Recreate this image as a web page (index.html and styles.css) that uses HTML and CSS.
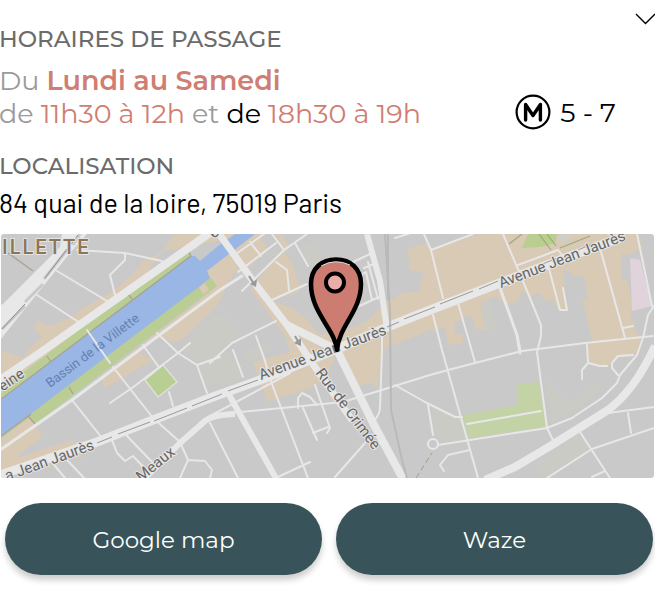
FILE: index.html
```html
<!DOCTYPE html>
<html lang="fr">
<head>
<meta charset="utf-8">
<meta name="viewport" content="width=device-width, initial-scale=1">
<title>Point de passage</title>
<link rel="stylesheet" href="styles.css">
</head>
<body>
<main class="place">
  <header class="top">
    <h2 class="heading">HORAIRES DE PASSAGE</h2>
    <button class="toggle" type="button" aria-label="Replier">
      <svg viewBox="0 0 20 12" width="20" height="12"><path d="M1 1 L10.500 10.500 L20 1" fill="none" stroke="#000" stroke-width="1.400"/></svg>
    </button>
  </header>
  <section class="schedule">
    <p class="hours">Du <strong>Lundi au Samedi</strong><br>de <em>11h30 à 12h</em> et <b>de</b> <em>18h30 à 19h</em></p>
    <p class="metro">
      <svg viewBox="0 0 36 36" width="36" height="36" aria-hidden="true"><circle cx="18" cy="18" r="16.400" fill="none" stroke="#000" stroke-width="2.200"/><path d="M10.600 26V10.500L18 21.500L25.400 10.500V26" fill="none" stroke="#000" stroke-width="3.400" stroke-linejoin="round" stroke-linecap="round"/></svg>
      <span>5 - 7</span>
    </p>
  </section>
  <h2 class="heading">LOCALISATION</h2>
  <address class="address">84 quai de la loire, 75019 Paris</address>
  <svg class="map" viewBox="1 234 653 244" role="img" aria-label="Plan du quartier">
    <rect x="0" y="234" width="655" height="244" fill="#c9c9c9"/>
    <g fill="#d9cab5">
      <path d="M175 234H255L240 250L222 240L164 251L143 261L132 275L113 291L80 310L70 318L50 326L37 321L35 331L43 336L30 348L23 358L0 350V400L120 310Z"/>
      <path d="M0 440L30 417L42 435L35 443L19 454L17 458L40 450L73 440L82 457L50 465L0 478Z"/>
      <path d="M215 278L229 268L235 270L217 306L180 341L172 342L160 336L133 350L153 360L105 388L100 377L200 300Z"/>
      <path d="M205 259L224 240L253 234L282 234L292 252L300 270L299 292L271 300L293 309L306 319L318 334L340 332L366 322L388 300L394 298L418 294L423 272L410 270L408 249L430 242V330L382 350L377 388L370 382L356 388L337 353L327 375L335 372L313 387L268 402L253 362L290 352L285 335L268 313L237 271L210 293Z"/>
      <path d="M425 252L478 234H638L643 248L628 256L622 253V280L628 281L633 310L630 311L637 335L643 336L637 353L612 360L610 366L588 363L587 345L592 341L583 301L588 296L583 276L572 275L568 270L563 271L567 310H558L553 300L545 301L540 293L530 296L522 291L518 301L505 306L497 296L481 303L484 321L485 331L475 328L473 318L465 316L455 323V333L463 335V343L448 345L445 328L425 330Z"/>
    </g>
    <g fill="#c9c9c9">
      <path d="M262 234H276L282 250L250 290L236 266L262 245Z M284 253L296 244L306 262L299 284L292 262Z"/>
      <path d="M425 234H478L431 251Z"/>
    </g>
    <path d="M237 254L262 240L268 250L244 272Z M273 262L285 268L288 285L268 298L256 284Z" fill="#d9cab5"/>
    <g fill="#cacbc4">
      <path d="M210 318L226 315L240 333L219 350L215 372L208 390L194 360L182 348Z M210 363L233 352L243 377L217 389Z M301 247L316 243L322 256L314 268L304 260Z"/>
      <path d="M545 380L568 403L598 382L603 387L572 413L552 422Z M432 405L463 418L468 440L435 442Z M535 463L578 433L590 448L550 477H542Z M480 303L490 301L496 328L485 331Z M243 352L263 344L270 352L248 362Z"/>
    </g>
    <path d="M390 300L400 294L425 290L422 305L392 323Z" fill="#d9cab5"/>
    <path d="M630 258L640 260L652 306L632 311Z" fill="#e0d3dc"/>
    <path d="M528 234H558L555 243L541 247L522 248Z" fill="#b9ce8f"/>
    <path d="M555 236L575 234L565 243Z" fill="#cfcfca"/>
    <path d="M463 415L518 405L517 384L539 382L546 427L468 438Z" fill="#c4d3a6"/>
    <path d="M163 365L177 382L158 397L145 380Z" fill="#b9ce92" stroke="#dedfd9" stroke-width="1.500"/>
    <path d="M0 390L187 248L192 257L0 403Z M0 437L210 277L217 286L35 424L30 417L0 439Z" fill="#b9cd95"/>
    <path d="M199 287L205 283L209 290L203 294Z" fill="#d9cab5"/>
    <path d="M0 400L190 256H195L200 261L218 246L235 234H255L207 271L210 278L200 286L0 437Z" fill="#99b6e4"/>
    <path d="M0 400L191 256L188 250M128 294L132 299M47 356L51 362M69 387L73 394M28 416L35 424M0 437L31 414" fill="none" stroke="#a8a391" stroke-width="1.300"/>
    <path d="M62 234H87L70 253L45 284L0 340V307L25 282L60 247Z" fill="#e8e8e8"/>
    <path d="M80 234L73 245M67 250L44 279M43 284L25 302M25 306L2 329" fill="none" stroke="#c9c9c9" stroke-width="3"/>
    <path d="M78 235L45 278M25 304L2 329" fill="none" stroke="#8f8f8f" stroke-width="1"/>
    <path d="M8 253L33 271" stroke="#aaa28e" stroke-width="1.300"/>
    <path d="M509 244L522 234M539 234L551 250M547 234L556 246M560 248L590 236" fill="none" stroke="#99aa7d" stroke-width="1.200"/>
    <g fill="none" stroke="#e7e7e7" stroke-width="2" stroke-linejoin="round" stroke-linecap="round">
      <path d="M77 250L125 253L162 261M125 253V260L110 275L115 295M57 271L107 301M37 295L80 323M0 305L7 308M87 330L110 363"/>
      <path d="M157 333L178 353L197 365L220 357M197 365L207 393M143 345L158 366M178 353L132 388L110 403M72 400L102 438M178 353L190 343M169 392L173 406"/>
      <path d="M113 367L153 418L180 442L188 460L205 461L212 470L210 478M188 460L180 478M112 440L117 453L125 461L133 456L150 474M126 435L154 464M50 460L65 478M68 461L84 478"/>
      <path d="M232 343L276 321M256 336L264 358L273 387L308 478M210 363L232 343M233 350L243 377M210 423L238 478M278 477L310 462M290 373L210 416"/>
      <path d="M317 405L310 397L302 393L298 398V408M303 408L317 440M315 385L330 428L327 433M313 433L328 427M335 477L365 443"/>
      <path d="M236 254L264 234M272 234L284 250L242 291M250 242L261 256M276 262L287 270L289 290M295 243L308 266M272 300L307 284M276 243L238 272M284 250L307 234M395 238L420 230"/>
      <path d="M353 262L370 254M356 278L366 272L372 300M364 268L374 264M368 262L378 299M355 308L379 297M382 328V350L380 407Q380 415 373 422M424 234L431 250L443 298M431 250L473 234"/>
      <path d="M230 413L343 402L430 375L448 370L522 351L585 343L653 336M395 385L425 402L455 417H462M433 315L442 350L478 478M458 303L475 362M428 405L433 435M438 445L547 428"/>
      <path d="M503 234L523 281L541 325V336L537 352L547 428L553 440M518 265L558 250L562 255M548 265L560 310H567L563 288M600 248L625 338M623 328L633 326M637 234L652 306M467 424L541 411"/>
      <path d="M547 428L572 418L602 398L617 383L620 375L637 355L643 338L648 315L654 306M580 432L610 478M547 478L592 449L654 428M608 413L654 407M628 413L631 433M592 477L605 471M470 450L448 455L440 465L444 471M587 345L588 363L582 370V379M588 363L600 366H607M633 355L618 356L612 363V368L618 375"/>
      <path d="M0 450L72 400L220 290L242 276" stroke-width="3"/>
      <path d="M500 288L517 335L520 353M517 335L520 351" stroke-width="3"/>
    </g>
    <g fill="none" stroke="#e8e8e8" stroke-linejoin="round">
      <path d="M0 380L37 355L207 235L212 231" stroke-width="8"/>
      <path d="M217 231L253 281L287 325L310 360L352 420" stroke-width="7"/>
      <path d="M287 325L337 350L373 423L403 479" stroke-width="8"/>
      <path d="M143 480L180 443L205 421Q212 415 235 414" stroke-width="6"/>
      <path d="M228 393L277 480M367 234L380 281L387 329" stroke-width="6"/>
      <path d="M485 480L515 467L552 445L608 410Q635 390 655 346" stroke-width="8"/>
      <path d="M0 475L97 442L153 420L210 398L260 380L337 349L390 326L430 310L500 283L560 260L620 238" stroke-width="9"/>
    </g>
    <circle cx="433" cy="444" r="5" fill="#c9c9c9" stroke="#e7e7e7" stroke-width="2"/>
    <path d="M385 234L390 312L391 410L402 460L407 478M388 234L388 300" fill="none" stroke="#b9b9b9" stroke-width="2"/>
    <path d="M97 443L112 437M118 434L150 422M154 421L187 408M192 406L222 394M228 391L258 380M387 327L399 322M404 319L435 307M440 304L473 291M479 289L498 281M540 265L560 257M578 250L592 244" fill="none" stroke="#999" stroke-width="1"/>
    <path d="M416 478L432 453" stroke="#9da184" stroke-dasharray="6 3"/>
    <g fill="#999" stroke="#999"><path d="M249 276L254 284" stroke-width="2"/><path d="M250 284L257 279L256 287Z" stroke="none"/><path d="M295 336L299 343" stroke-width="2"/><path d="M294 343L301 338L301 346Z" stroke="none"/></g>
    <g class="road">
      <text transform="translate(2 254)" class="district">ILLETTE</text>
      <text transform="translate(50 388) rotate(-37)" class="water">Bassin de la Villette</text>
      <text transform="translate(261 380) rotate(-20)">Avenue Jean Jaurès</text>
      <text transform="translate(501 288) rotate(-21)">Avenue Jean Jaurès</text>
      <text transform="translate(7 481) rotate(-20)">a Jean Jaurès</text>
      <text transform="translate(-4 396) rotate(-34)">seine</text>
      <text transform="translate(141 482) rotate(-39)">Meaux</text>
      <text transform="translate(315 373) rotate(53)">Rue de Crimée</text>
      <text transform="translate(214 239) rotate(-42)">e</text>
    </g>
    <path d="M337 350C335 329 311 313 311 284C311 268 322 259.500 336 259.500C351 259.500 361 269 361 284C361 311 339 326 337 350Z" fill="#cc7c71" stroke="#000" stroke-width="4.500" stroke-linejoin="round"/>
    <path d="M321 266Q335 258 350 265" fill="none" stroke="#ddd" stroke-width="1"/>
    <circle cx="335" cy="282.500" r="9" fill="#e9aea8" stroke="#000" stroke-width="4"/>
  </svg>
  <nav class="actions">
    <button type="button">Google map</button>
    <button type="button">Waze</button>
  </nav>
</main>
</body>
</html>
```
FILE: styles.css
```css
* { box-sizing: border-box; }
body {
  margin: 0;
  background: #fff;
  color: #000;
  font-family: Montserrat, Inter, sans-serif;
}
.place { overflow: hidden; padding-top: 12px; }
.top, .schedule {
  display: flex;
  justify-content: space-between;
}
.heading {
  margin: 0 0 0 -1px;
  color: #6b6b6b;
  font-size: 23px;
  font-weight: 500;
  line-height: 28px;
}
.top .heading { padding-top: 13px; }
.toggle {
  display: block;
  align-self: flex-start;
  padding: 1px 0;
  border: 0;
  background: none;
  line-height: 0;
}
.schedule { padding: 11px 39px 22px 0; }
.hours {
  margin: 0 0 0 -1px;
  color: #9b9b9b;
  font-size: 27px;
  font-weight: 400;
  line-height: 33px;
}
.hours strong { color: #d07d72; font-weight: 600; }
.hours em { color: #d07d72; font-style: normal; }
.hours b { color: #000; font-weight: 400; }
.metro {
  display: flex;
  align-items: center;
  align-self: flex-end;
  gap: 9px;
  margin: 0;
  font-size: 27px;
  font-weight: 400;
}
.address {
  margin-left: -1px;
  padding: 6px 0 16px;
  font-family: Barlow, Roboto, sans-serif;
  font-size: 27px;
  font-style: normal;
  line-height: 32px;
}
.map {
  display: block;
  width: calc(100% - 2px);
  margin: 0 1px;
  border-radius: 3px;
}
.road text {
  fill: #666;
  font: 400 15px Roboto, sans-serif;
  paint-order: stroke;
  stroke: #e4e4e4;
  stroke-width: 2px;
}
.road .district {
  fill: #8d7557;
  font-size: 20px;
  font-weight: 500;
  letter-spacing: 2px;
}
.road .water {
  fill: #6480b5;
  font-size: 13px;
  stroke: none;
}
.actions {
  display: grid;
  grid-template-columns: 1fr 1fr;
  gap: 14px;
  padding: 25px 2px 19px 5px;
}
.actions button {
  height: 72px;
  padding-top: 3px;
  border: 0;
  border-radius: 36px;
  background: #38545a;
  box-shadow: 0 5px 6px rgba(0, 0, 0, .2);
  color: #fff;
  font: 400 23px Montserrat, Inter, sans-serif;
}
```
